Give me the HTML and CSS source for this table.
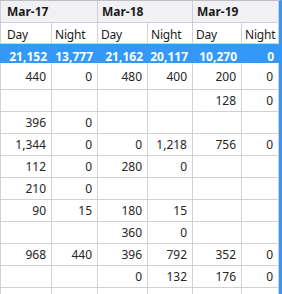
FILE: index.html
```html
<!DOCTYPE html>
<html>
<head>
<meta charset="utf-8">
<link rel="stylesheet" href="styles.css">
</head>
<body>
<div class="sheet">
  <div class="grid">
    <div class="c grp">Mar-17</div>
    <div class="c grp">Mar-18</div>
    <div class="c grp">Mar-19</div>

    <div class="c sub first">Day</div><div class="c sub">Night</div>
    <div class="c sub">Day</div><div class="c sub">Night</div>
    <div class="c sub">Day</div><div class="c sub">Night</div>

    <div class="c tot">21,152</div><div class="c tot">13,777</div>
    <div class="c tot">21,162</div><div class="c tot">20,117</div>
    <div class="c tot">10,270</div><div class="c tot">0</div>

    <div class="c d first">440</div><div class="c d">0</div><div class="c d">480</div><div class="c d">400</div><div class="c d">200</div><div class="c d">0</div>
    <div class="c d first"></div><div class="c d"></div><div class="c d"></div><div class="c d"></div><div class="c d">128</div><div class="c d">0</div>
    <div class="c d first">396</div><div class="c d">0</div><div class="c d"></div><div class="c d"></div><div class="c d"></div><div class="c d"></div>
    <div class="c d first">1,344</div><div class="c d">0</div><div class="c d">0</div><div class="c d">1,218</div><div class="c d">756</div><div class="c d">0</div>
    <div class="c d first">112</div><div class="c d">0</div><div class="c d">280</div><div class="c d">0</div><div class="c d"></div><div class="c d"></div>
    <div class="c d first">210</div><div class="c d">0</div><div class="c d"></div><div class="c d"></div><div class="c d"></div><div class="c d"></div>
    <div class="c d first">90</div><div class="c d">15</div><div class="c d">180</div><div class="c d">15</div><div class="c d"></div><div class="c d"></div>
    <div class="c d first"></div><div class="c d"></div><div class="c d">360</div><div class="c d">0</div><div class="c d"></div><div class="c d"></div>
    <div class="c d first">968</div><div class="c d">440</div><div class="c d">396</div><div class="c d">792</div><div class="c d">352</div><div class="c d">0</div>
    <div class="c d first"></div><div class="c d"></div><div class="c d">0</div><div class="c d">132</div><div class="c d">176</div><div class="c d">0</div>
    <div class="c d first"></div><div class="c d"></div><div class="c d"></div><div class="c d"></div><div class="c d"></div><div class="c d"></div>
  </div>
</div>
</body>
</html>
```

FILE: styles.css
```css
html, body {
  margin: 0;
  padding: 0;
  background: #ffffff;
  overflow: hidden;
}
.sheet {
  width: 282px;
  height: 294px;
  box-sizing: border-box;
  border-right: 3px solid #3597f7;
  border-top: 1px solid #bdbdc4;
  overflow: hidden;
  font-family: "Noto Sans", "Open Sans", sans-serif;
  font-size: 12px;
  color: #262626;
}
.grid {
  display: grid;
  grid-template-columns: 52px 46px 50px 45px 49px 37px;
  grid-template-rows: 22px 21px 19px 27px;
  grid-auto-rows: 22px;
}
.c {
  box-sizing: border-box;
  border-right: 1px solid #d0cee0;
  border-bottom: 1px solid #d0cee0;
  white-space: nowrap;
  overflow: hidden;
  display: flex;
  align-items: center;
}
.grp {
  grid-column: span 2;
  background: #f1f1f3;
  font-weight: bold;
  padding-left: 4px;
  color: #1b1b1b;
}
.grp:first-child {
  padding-left: 6px;
  border-left: 1px solid #d0cee0;
}
.sub {
  padding-left: 3px;
  padding-top: 2px;
  color: #1b1b1b;
  letter-spacing: -0.2px;
}
.sub.first {
  padding-left: 6px;
}
.tot {
  background: #3597f7;
  color: #ffffff;
  font-weight: bold;
  border: none;
  justify-content: flex-end;
  padding-right: 5px;
  padding-top: 5px;
}
.d {
  justify-content: flex-end;
  padding-right: 5px;
}
.first {
  border-left: 1px solid #d0cee0;
}
```
